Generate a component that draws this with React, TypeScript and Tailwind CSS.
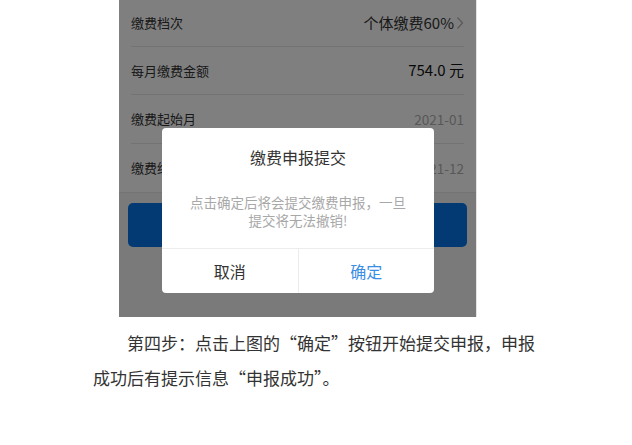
import React from "react";

const rows = [
  { label: "缴费档次", value: "个体缴费60%", kind: "select", h: "h-[47px]" },
  { label: "每月缴费金额", value: "754.0 元", kind: "amount", h: "h-[48px]" },
  { label: "缴费起始月", value: "2021-01", kind: "muted", h: "h-[49px]" },
  { label: "缴费终止月", value: "2021-12", kind: "muted", h: "h-[49px]" },
];

const Chevron = () => (
  <svg width="8" height="14" viewBox="0 0 8 14" className="ml-[2px]">
    <path d="M1.5 1.5 L6.5 7 L1.5 12.5" fill="none" stroke="#b5b5b5" strokeWidth="1.3" />
  </svg>
);

const PhoneScreen = () => {
  return (
    <div className="relative h-[317px] w-[357px] overflow-hidden bg-[#f4f4f4]">
      <div className="bg-white">
        {rows.map((row, i) => (
          <div
            key={row.label}
            className={`flex items-center justify-between px-[12px] ${row.h} ${
              i === rows.length - 1 ? "border-b border-[#e8e8e8]" : ""
            }`}
          >
            <div
              className={`flex h-full w-full items-center justify-between ${
                i < rows.length - 1 ? "border-b border-[#e6e6e6]" : ""
              }`}
            >
              <span className="text-[13px] text-[#333]">{row.label}</span>
              {row.kind === "select" && (
                <span className="flex items-center text-[15px] text-[#333]">
                  {row.value}
                  <Chevron />
                </span>
              )}
              {row.kind === "amount" && (
                <span className="text-[15px] text-[#111]">{row.value}</span>
              )}
              {row.kind === "muted" && (
                <span className="text-[13.5px] text-[#b0b0b0]">{row.value}</span>
              )}
            </div>
          </div>
        ))}
      </div>

      <div className="mx-[9px] mt-[10px] flex h-[44px] items-center justify-center rounded-[5px] bg-[#0874e8] text-[16px] text-white">
        确认提交
      </div>

      {/* modal mask + confirm dialog */}
      <div className="absolute inset-0 bg-black/50" />
      <div className="absolute left-[43px] top-[128px] w-[272px] overflow-hidden rounded-[4px] bg-white">
        <div className="px-[20px] pb-[19px] pt-[18px] text-center">
          <div className="text-[16px] leading-[22px] text-[#333]">缴费申报提交</div>
          <div className="mt-[25px] text-[13.5px] leading-[18px] text-[#a8a8a8]">
            点击确定后将会提交缴费申报，一旦
            <br />
            提交将无法撤销!
          </div>
        </div>
        <div className="flex h-[45px] border-t border-[#ececec]">
          <button className="flex flex-1 items-center justify-center border-r border-[#ececec] text-[16px] text-[#333]">
            取消
          </button>
          <button className="flex flex-1 items-center justify-center text-[16px] text-[#3a8ee6]">
            确定
          </button>
        </div>
      </div>
    </div>
  );
};

const App = () => {
  return (
    <div
      className="h-[445px] w-[632px] bg-white"
      style={{ fontFamily: '"Noto Sans CJK SC", "Noto Sans", sans-serif' }}
    >
      <div className="ml-[93px] w-[446px]">
        <div className="ml-[26px] flex">
          <PhoneScreen />
          <div className="w-px bg-[#e4e4e4]" />
        </div>
        <p className="mt-[8px] text-[17px] leading-[35px] text-[#333] [text-indent:2em]">
          第四步：点击上图的“确定”按钮开始提交申报，申报成功后有提示信息“申报成功”。
        </p>
      </div>
    </div>
  );
};

export default App;
